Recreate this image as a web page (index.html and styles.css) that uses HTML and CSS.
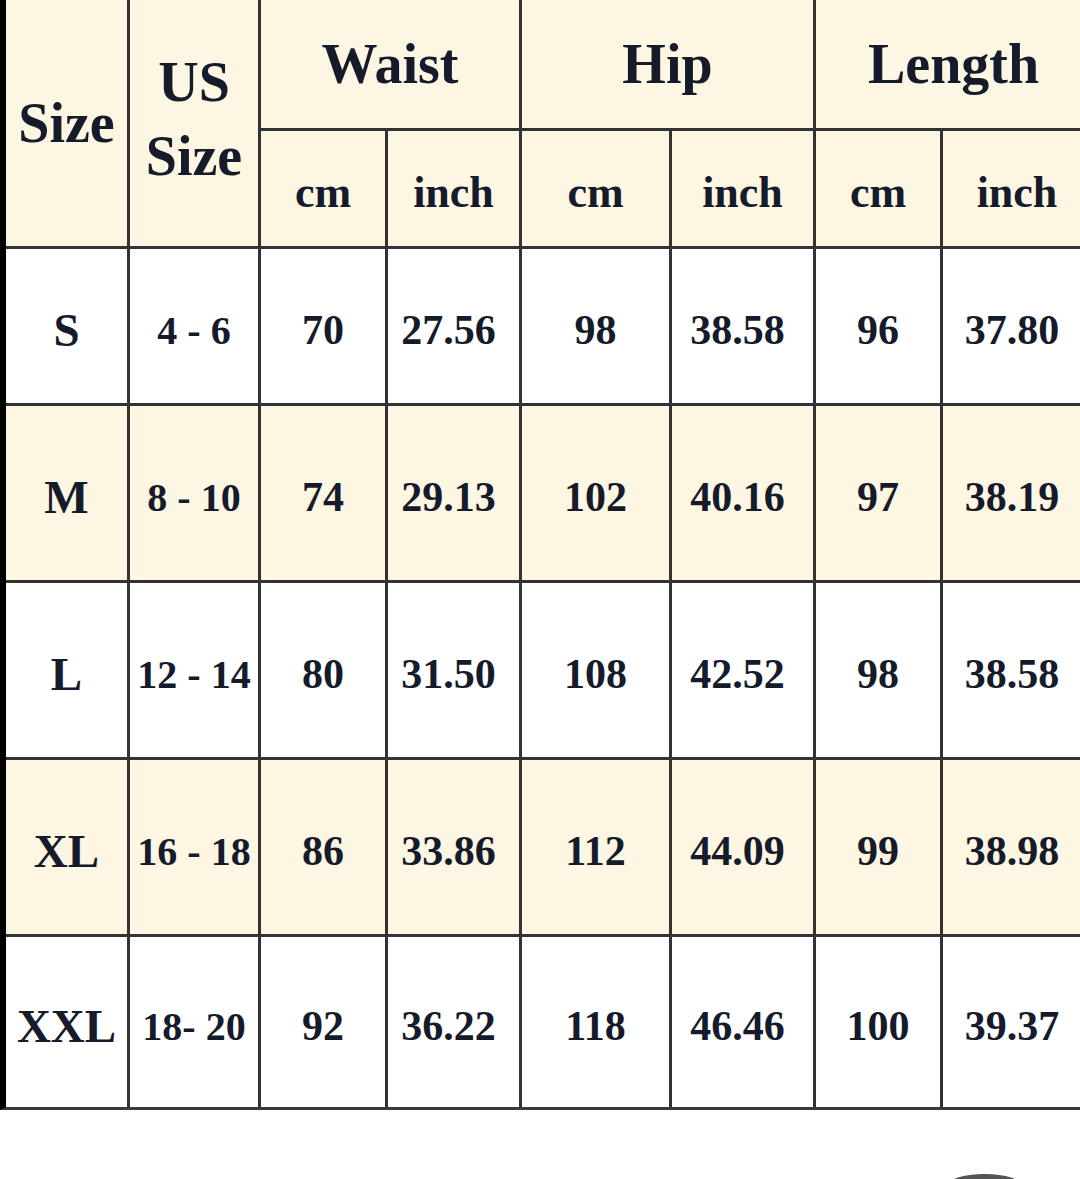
FILE: index.html
```html
<!DOCTYPE html>
<html>
<head>
<meta charset="utf-8">
<link rel="stylesheet" href="styles.css">
</head>
<body>
<div class="chart">
  <div class="cell hd big span2r">Size</div>
  <div class="cell hd big span2r us">US<br>Size</div>
  <div class="cell hd big span2c">Waist</div>
  <div class="cell hd big span2c">Hip</div>
  <div class="cell hd big span2c">Length</div>
  <div class="cell hd sub">cm</div><div class="cell hd sub">inch</div>
  <div class="cell hd sub">cm</div><div class="cell hd sub">inch</div>
  <div class="cell hd sub">cm</div><div class="cell hd sub">inch</div>

  <div class="cell sz">S</div><div class="cell us-v">4 - 6</div><div class="cell v">70</div><div class="cell v in">27.56</div><div class="cell v">98</div><div class="cell v in">38.58</div><div class="cell v">96</div><div class="cell v in">37.80</div>
  <div class="cell alt sz">M</div><div class="cell alt us-v">8 - 10</div><div class="cell alt v">74</div><div class="cell alt v in">29.13</div><div class="cell alt v">102</div><div class="cell alt v in">40.16</div><div class="cell alt v">97</div><div class="cell alt v in">38.19</div>
  <div class="cell sz">L</div><div class="cell us-v">12 - 14</div><div class="cell v">80</div><div class="cell v in">31.50</div><div class="cell v">108</div><div class="cell v in">42.52</div><div class="cell v">98</div><div class="cell v in">38.58</div>
  <div class="cell alt sz">XL</div><div class="cell alt us-v">16 - 18</div><div class="cell alt v">86</div><div class="cell alt v in">33.86</div><div class="cell alt v">112</div><div class="cell alt v in">44.09</div><div class="cell alt v">99</div><div class="cell alt v in">38.98</div>
  <div class="cell sz">XXL</div><div class="cell us-v">18- 20</div><div class="cell v">92</div><div class="cell v in">36.22</div><div class="cell v">118</div><div class="cell v in">46.46</div><div class="cell v">100</div><div class="cell v in">39.37</div>
</div>
<div class="pill"></div>
</body>
</html>
```

FILE: styles.css
```css
html, body {
  margin: 0;
  padding: 0;
  overflow: hidden;
  background: #ffffff;
  width: 1080px;
  height: 1179px;
}
body {
  position: relative;
  font-family: "Liberation Serif", "Times New Roman", serif;
  font-weight: bold;
  color: #151b2a;
}
.chart {
  display: grid;
  width: max-content;
  grid-template-columns: 121px 128px 124px 131px 147px 141px 124px 148px;
  grid-template-rows: 128px 115px 154px 174px 174px 174px 170px;
  gap: 3px;
  background: #333333;
  border-left: 6px solid #000000;
  border-bottom: 3px solid #3a3a3a;
}
.cell {
  background: #ffffff;
  display: flex;
  align-items: center;
  justify-content: center;
  text-align: center;
  white-space: nowrap;
  box-sizing: border-box;
}
.hd, .alt { background: #fdf6e3; }
.big { font-size: 56px; }
.span2r { grid-row: span 2; }
.span2c { grid-column: span 2; }
.us { line-height: 74px; padding-bottom: 8px; }
.sub { font-size: 44px; padding-top: 8px; }
.sz { font-size: 47px; padding-top: 8px; }
.us-v { font-size: 40px; padding-top: 8px; }
.v { font-size: 42px; padding-top: 8px; }
.in { padding-right: 10px; }
.pill {
  position: absolute;
  left: 947px;
  top: 1174px;
  width: 75px;
  height: 24px;
  border-radius: 37px / 12px;
  background: #555555;
}
```
